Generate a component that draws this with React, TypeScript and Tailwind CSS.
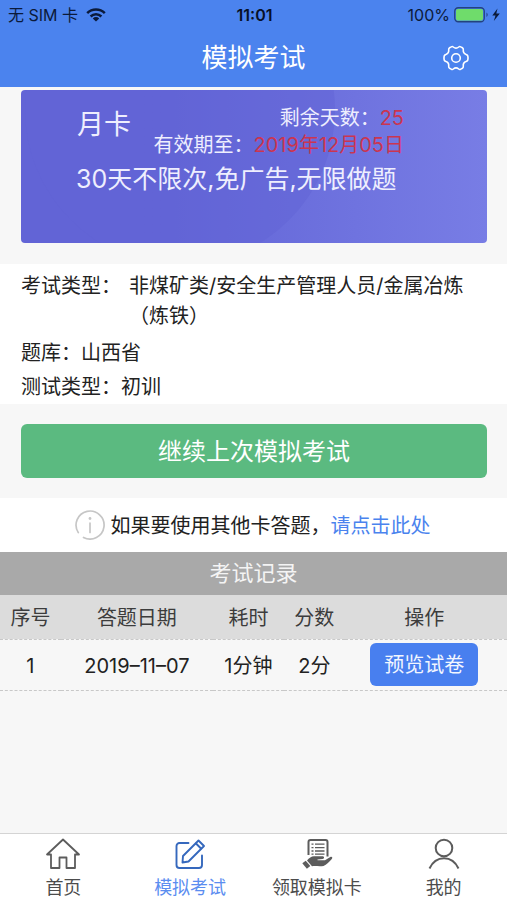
import type { ReactNode } from "react";

const stroke = {
  fill: "none",
  stroke: "currentColor",
  strokeLinejoin: "round" as const,
  strokeLinecap: "round" as const,
};

function WifiIcon() {
  return (
    <svg width="20" height="14" viewBox="0 0 20 14" aria-hidden="true">
      <g fill="none" stroke="currentColor" strokeWidth="2.5">
        <path d="M1.2 5.1a12.6 12.6 0 0 1 17.6 0" />
        <path d="M4.6 8.5a7.8 7.8 0 0 1 10.8 0" />
      </g>
      <path d="M10 13.6 6.8 10.4a4.6 4.6 0 0 1 6.4 0z" fill="currentColor" />
    </svg>
  );
}

function BatteryIcon() {
  return (
    <svg width="47" height="16" viewBox="0 0 47 16" aria-hidden="true">
      <rect x="0.75" y="0.75" width="29.5" height="14" rx="3.5" fill="none" stroke="#23427f" strokeWidth="1.3" />
      <rect x="2" y="2" width="27" height="11.5" rx="2" fill="#6fdc6b" />
      <path d="M32.500 5.500c1.6.8 1.6 3.7 0 4.500z" fill="#23427f" />
      <path d="M43.500 1.500 38.300 8.600h3.200L39.800 14l6-7.400h-3.500z" fill="#0b1a3a" />
    </svg>
  );
}

function GearIcon() {
  return (
    <svg width="28" height="26" viewBox="0 0 28 26" aria-hidden="true" {...stroke} strokeWidth="1.6">
      <path d="M9.2 1.9c.8-.5 1.5-.5 2.1.1 1.7 1.5 3.7 1.5 5.4 0 .6-.6 1.3-.6 2.1-.1l1.6.9c.8.5 1 1.1.9 1.9-.3 2.3.7 4 2.8 4.7.9.3 1.5.7 1.7 1.6.3 1.3.3 2.700 0 4-.2.9-.8 1.300-1.700 1.600-2.100.7-3.100 2.400-2.800 4.700.1.8-.1 1.400-.9 1.900l-1.600.9c-.8.5-1.500.5-2.100-.1-1.700-1.500-3.700-1.500-5.400 0-.6.6-1.300.6-2.100.1l-1.600-.9c-.8-.5-1-1.100-.9-1.900.3-2.300-.7-4-2.800-4.700-.9-.3-1.500-.7-1.700-1.600-.3-1.300-.3-2.700 0-4 .2-.9.8-1.300 1.700-1.600 2.100-.7 3.100-2.400 2.800-4.700-.1-.8.1-1.400.9-1.900z" />
      <circle cx="14" cy="13" r="4.3" />
    </svg>
  );
}

function InfoIcon() {
  return (
    <svg width="30" height="30" viewBox="0 0 30 30" aria-hidden="true" fill="none" stroke="#c6c6c6" strokeWidth="1.7" strokeLinecap="round">
      <path d="M3.300 22.600A14 14 0 1 1 8.500 27.400" />
      <path d="M15 13v9.500" />
      <circle cx="15" cy="8.500" r="1.400" fill="#c6c6c6" stroke="none" />
    </svg>
  );
}

function HomeIcon() {
  return (
    <svg width="36" height="32" viewBox="0 0 36 32" aria-hidden="true" {...stroke} strokeWidth="1.8">
      <path d="M18 1.500 2 16.500h4V30h8.500V19.500h7V30H30V16.500h4z" />
    </svg>
  );
}

function EditIcon() {
  return (
    <svg width="32" height="32" viewBox="0 0 32 32" aria-hidden="true" {...stroke} strokeWidth="1.9">
      <path d="M14.500 5H5.500a3 3 0 0 0-3 3V27a3 3 0 0 0 3 3H25a3 3 0 0 0 3-3V17.500" />
      <path d="m24.500 2.500 5.500 5.500L14.500 23.500 8.500 24.500l.5-6.500z" />
      <path d="m22 5.500 5 5" />
    </svg>
  );
}

function HandCardIcon() {
  return (
    <svg width="32" height="32" viewBox="0 0 32 32" aria-hidden="true">
      <path d="M7.500 17V4A2 2 0 0 1 9.500 2h15a2 2 0 0 1 2 2v14.500" fill="none" stroke="currentColor" strokeWidth="2" />
      <g stroke="currentColor" strokeWidth="1.300">
        <path d="M10.500 6.200h2M14 6.200h9.500M10.500 9.600h2M14 9.600h9.500M10.500 13h2M14 13h9.500M10.500 16.200h2M14 16.200h9.500" />
      </g>
      <path d="m1.300 25.300 3.400-2.600 4.600 5.200-3.400 2.800z" fill="currentColor" />
      <path d="M6 22.500c2-2.500 4.500-4.300 7-4.300h8.500c2 0 2.200 2.600 0 2.800l-5 .6v.7h7.500l5.300-3.300c1.700-.8 2.700.6 1.500 1.900-2.300 2.700-5.300 5.800-8.300 7-3.500.9-8-.2-11.500.4z" fill="currentColor" />
    </svg>
  );
}

function UserIcon() {
  return (
    <svg width="32" height="32" viewBox="0 0 32 32" aria-hidden="true" fill="none" stroke="currentColor" strokeWidth="2">
      <circle cx="16" cy="10" r="8.300" />
      <path d="M1.500 30.500c3-6.300 8.300-10.200 14.500-10.200s11.500 3.900 14.500 10.200" />
    </svg>
  );
}

function Tab({ icon, label, active = false }: { icon: ReactNode; label: string; active?: boolean }) {
  return (
    <a
      href="#"
      aria-current={active ? "page" : undefined}
      className={"flex flex-1 flex-col items-center pt-1 " + (active ? "text-[#5b8df0]" : "text-[#4c4c4c]")}
    >
      <span className={"h-8 " + (active ? "text-[#3568bd]" : "text-[#5c5c5c]")}>{icon}</span>
      <span className="text-lg leading-9">{label}</span>
    </a>
  );
}

const records = [{ id: 1, date: "2019–11–07", time: "1分钟", score: "2分" }];

export default function App() {
  return (
    <div className="flex min-h-screen flex-col bg-[#f7f7f7] font-['Inter','Noto_Sans_CJK_SC',sans-serif] text-xl text-[#222]">
      <header className="bg-[#4b83ee]">
        <div className="grid h-[30px] grid-cols-[1fr_auto_1fr] items-center pr-1.5 pl-2 text-base leading-[30px] text-[#0b1a3a]">
          <div className="flex items-center gap-2">
            <span>无 SIM 卡</span>
            <WifiIcon />
          </div>
          <span className="font-semibold text-[#071026]">11:01</span>
          <div className="flex items-center justify-end gap-1">
            <span>100%</span>
            <BatteryIcon />
          </div>
        </div>
        <div className="grid h-[57px] grid-cols-[1fr_auto_1fr] items-center px-[37px] pb-0.5 text-white">
          <span />
          <h1 className="text-[26px] leading-[38px]">模拟考试</h1>
          <button type="button" aria-label="设置" className="justify-self-end">
            <GearIcon />
          </button>
        </div>
      </header>

      <main className="flex-1">
        <section className="pt-[3px] pr-5 pb-[21px] pl-[21px]">
          <div className="relative h-[153px] overflow-hidden rounded-sm bg-linear-to-r from-[#6264d6] from-30% to-[#787de5] text-[#eeeefe]">
            <div className="absolute -top-[135px] left-1 size-[310px] rounded-full bg-[#6264d6]/50" />
            <div className="relative pt-3.5 pr-[83px] pl-[55px]">
              <div className="flex items-start justify-between">
                <h2 className="pl-px text-[27px] leading-[42px]">月卡</h2>
                <dl className="pt-px text-right leading-[27px]">
                  <div>
                    <dt className="inline">剩余天数：</dt>
                    <dd className="inline text-[#cb3550]">25</dd>
                  </div>
                  <div>
                    <dt className="inline">有效期至：</dt>
                    <dd className="inline text-[#cb3550]">2019年12月05日</dd>
                  </div>
                </dl>
              </div>
              <p className="text-[25px] leading-10 whitespace-nowrap">30天不限次,免广告,无限做题</p>
            </div>
          </div>
        </section>

        <dl className="bg-white px-[21px] pt-[7px]">
          <div className="mb-[5px] flex gap-2 leading-[30px]">
            <dt className="shrink-0">考试类型：</dt>
            <dd>非煤矿类/安全生产管理人员/金属冶炼（炼铁）</dd>
          </div>
          <div className="flex leading-[34px]">
            <dt>题库：</dt>
            <dd>山西省</dd>
          </div>
          <div className="flex leading-[34px]">
            <dt>测试类型：</dt>
            <dd>初训</dd>
          </div>
        </dl>

        <div className="py-5 pr-5 pl-[21px]">
          <button type="button" className="h-[54px] w-full rounded-md bg-[#5bba80] pt-0.5 text-2xl text-white">
            继续上次模拟考试
          </button>
        </div>

        <div className="flex h-[54px] items-center justify-center gap-1.5 bg-white pr-0.5">
          <InfoIcon />
          <p className="pt-0.5">
            如果要使用其他卡答题，
            <a href="#" className="text-[#4a83ee]">
              请点击此处
            </a>
          </p>
        </div>

        <h2 className="bg-[#a9a9a9] text-center text-[22px] leading-[43px] text-[#f4f4f4]">考试记录</h2>
        <table className="w-full table-fixed border-collapse text-center">
          <thead className="bg-[#dcdcdc] text-[#3c3c3c]">
            <tr className="h-11 border-b border-dashed border-[#c8c8c8]">
              <th scope="col" className="w-[12%] pt-0.5 font-normal">序号</th>
              <th scope="col" className="w-[30%] pt-0.5 font-normal">答题日期</th>
              <th scope="col" className="w-[14%] pt-0.5 font-normal">耗时</th>
              <th scope="col" className="w-[12%] pt-0.5 font-normal">分数</th>
              <th scope="col" className="w-[32%] pt-0.5 pr-[3px] font-normal">操作</th>
            </tr>
          </thead>
          <tbody>
            {records.map((r) => (
              <tr key={r.id} className="h-[51px] border-b border-dashed border-[#c8c8c8]">
                <td className="pt-0.5">{r.id}</td>
                <td className="pt-0.5">{r.date}</td>
                <td className="pt-0.5">{r.time}</td>
                <td className="pt-0.5">{r.score}</td>
                <td className="pr-[3px]">
                  <button type="button" className="mx-auto block h-[43px] w-[108px] rounded-md bg-[#487fef] text-[#f2f6ff]">
                    预览试卷
                  </button>
                </td>
              </tr>
            ))}
          </tbody>
        </table>
      </main>

      <nav className="flex h-[67px] border-t border-[#d4d4d4] bg-white">
        <Tab icon={<HomeIcon />} label="首页" />
        <Tab icon={<EditIcon />} label="模拟考试" active />
        <Tab icon={<HandCardIcon />} label="领取模拟卡" />
        <Tab icon={<UserIcon />} label="我的" />
      </nav>
    </div>
  );
}
